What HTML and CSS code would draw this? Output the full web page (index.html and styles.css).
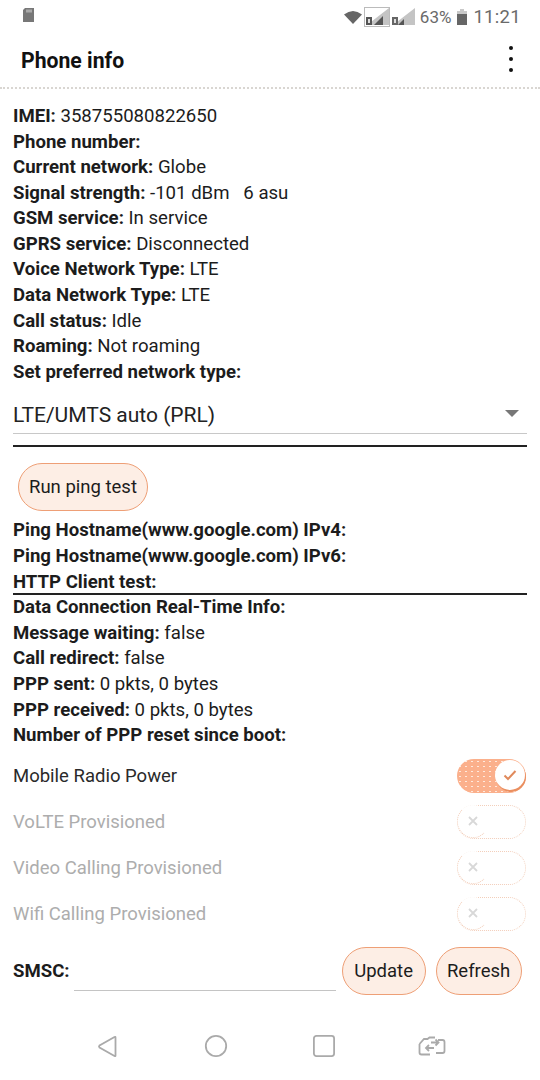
FILE: index.html
```html
<!DOCTYPE html>
<html lang="en">
<head>
<meta charset="utf-8">
<title>Phone info</title>
<link rel="stylesheet" href="styles.css">
</head>
<body>
<div class="screen">
  <div class="status">
    <svg class="sd" viewBox="0 0 11 14" width="11" height="14"><path d="M2 0h9v14H0V2z" fill="#777"/><path d="M4 1.500v3M6 1.500v3M8 1.500v3" stroke="#ddd" stroke-width="1"/></svg>
    <div class="status-right">
      <svg class="wifi" viewBox="0 0 18 14" width="18" height="14"><path d="M0 4.500Q9 -2.500 18 4.500L9 14z" fill="#666"/></svg>
      <div class="sim sim-active">
        <svg viewBox="0 0 24 18" width="24" height="18"><path d="M24 0V17H2z" fill="#c4c4c4"/><path d="M18 8V17H9z" fill="#555"/><rect x="1" y="9" width="6" height="8" fill="#555"/><rect x="3" y="11" width="2" height="4" fill="#ddd"/></svg>
      </div>
      <svg class="sim2" viewBox="0 0 24 18" width="24" height="18"><path d="M24 0V17H2z" fill="#c4c4c4"/><path d="M13 11V17H7z" fill="#555"/><rect x="1" y="9" width="6" height="8" fill="#666"/><rect x="3" y="11" width="2" height="4" fill="#ddd"/></svg>
      <span class="pct">63%</span>
      <svg class="batt" viewBox="0 0 10 16" width="10" height="16"><path d="M3 0h4v2h3v14H0V2h3z" fill="#c9c9c9"/><rect y="5" width="10" height="11" fill="#666"/></svg>
      <span class="clock">11:21</span>
    </div>
  </div>
  <header class="appbar">
    <h1 class="title">Phone info</h1>
    <div class="more"><i></i><i></i><i></i></div>
  </header>
  <main class="content">
    <div class="group">
      <p class="line"><b>IMEI:</b> 358755080822650</p>
      <p class="line"><b>Phone number:</b></p>
      <p class="line"><b>Current network:</b> Globe</p>
      <p class="line"><b>Signal strength:</b> -101 dBm &nbsp; 6 asu</p>
      <p class="line"><b>GSM service:</b> In service</p>
      <p class="line"><b>GPRS service:</b> Disconnected</p>
      <p class="line"><b>Voice Network Type:</b> LTE</p>
      <p class="line"><b>Data Network Type:</b> LTE</p>
      <p class="line"><b>Call status:</b> Idle</p>
      <p class="line"><b>Roaming:</b> Not roaming</p>
      <p class="line"><b>Set preferred network type:</b></p>
    </div>
    <div class="spinner">
      <span>LTE/UMTS auto (PRL)</span>
      <i class="caret"></i>
    </div>
    <div class="rule rule-top"></div>
    <button class="pill ping">Run ping test</button>
    <div class="group">
      <p class="line"><b>Ping Hostname(www.google.com) IPv4:</b></p>
      <p class="line"><b>Ping Hostname(www.google.com) IPv6:</b></p>
      <p class="line"><b>HTTP Client test:</b></p>
    </div>
    <div class="rule rule-mid"></div>
    <div class="group">
      <p class="line"><b>Data Connection Real-Time Info:</b></p>
      <p class="line"><b>Message waiting:</b> false</p>
      <p class="line"><b>Call redirect:</b> false</p>
      <p class="line"><b>PPP sent:</b> 0 pkts, 0 bytes</p>
      <p class="line"><b>PPP received:</b> 0 pkts, 0 bytes</p>
      <p class="line"><b>Number of PPP reset since boot:</b></p>
    </div>
    <div class="toggles">
      <div class="toggle-row">
        <span>Mobile Radio Power</span>
        <div class="switch on"><div class="knob"><svg viewBox="0 0 14 12" width="14" height="12"><path d="M1.500 6.500L5 10L12.500 2" fill="none" stroke="#e08a5c" stroke-width="2"/></svg></div></div>
      </div>
      <div class="toggle-row off">
        <span>VoLTE Provisioned</span>
        <div class="switch"><div class="knob"><svg viewBox="0 0 10 10" width="10" height="10"><path d="M1 1L9 9M9 1L1 9" stroke="#d8d8d8" stroke-width="1.800"/></svg></div></div>
      </div>
      <div class="toggle-row off">
        <span>Video Calling Provisioned</span>
        <div class="switch"><div class="knob"><svg viewBox="0 0 10 10" width="10" height="10"><path d="M1 1L9 9M9 1L1 9" stroke="#d8d8d8" stroke-width="1.800"/></svg></div></div>
      </div>
      <div class="toggle-row off">
        <span>Wifi Calling Provisioned</span>
        <div class="switch"><div class="knob"><svg viewBox="0 0 10 10" width="10" height="10"><path d="M1 1L9 9M9 1L1 9" stroke="#d8d8d8" stroke-width="1.800"/></svg></div></div>
      </div>
    </div>
    <div class="smsc">
      <b>SMSC:</b>
      <div class="field"></div>
      <button class="pill update">Update</button>
      <button class="pill refresh">Refresh</button>
    </div>
  </main>
  <nav class="navbar">
    <svg viewBox="0 0 24 24" width="24" height="24"><path d="M19.500 3.500V21.500Q19.500 22.500 18.500 22L3.500 13.500Q2.500 12.500 3.500 11.500L18.500 3Q19.500 2.500 19.500 3.500Z" fill="none" stroke="#aaa" stroke-width="1.800"/></svg>
    <svg viewBox="0 0 24 24" width="24" height="24"><circle cx="12" cy="12" r="10.200" fill="none" stroke="#aaa" stroke-width="1.800"/></svg>
    <svg viewBox="0 0 24 24" width="24" height="24"><rect x="1.900" y="1.900" width="20.200" height="20.200" rx="2.500" fill="none" stroke="#aaa" stroke-width="1.800"/></svg>
    <svg class="link" viewBox="0 0 28 20" width="28" height="20"><path d="M1.500 8L6 3H9.500L11.500 1.500H17M20 4H24.500Q26.500 4 26.500 6V15Q26.500 17 24.500 17H18M1.500 8V16.500Q1.500 18.500 3.500 18.500H12M13 6.500H20.500M17.500 3.500L20.500 6.500L17.500 9.500M16 12H8M11 9L8 12L11 15" fill="none" stroke="#aaa" stroke-width="1.800"/></svg>
  </nav>
</div>
</body>
</html>
```
FILE: styles.css
```css
* { box-sizing: border-box; }
html, body { margin: 0; padding: 0; }
body { background: #fff; font-family: Roboto, "Liberation Sans", sans-serif; color: #1c1c1c; }
.screen { width: 540px; height: 1080px; display: flex; flex-direction: column; overflow: hidden; background: #fff; }
.status { height: 32px; padding: 8px 19px 0 23px; display: flex; justify-content: space-between; align-items: flex-start; color: #666; }
.status-right { display: flex; align-items: center; height: 18px; }
.wifi { margin-right: 2px; }
.sim-active { width: 26px; height: 20px; border: 1px solid #bbb; margin-right: 1px; display: flex; }
.sim-active svg { width: 24px; height: 18px; }
.sim2 { margin-right: 5px; }
.pct { font-size: 17px; color: #6a6a6a; margin-right: 6px; }
.batt { margin-right: 6px; }
.clock { font-size: 18.500px; color: #6a6a6a; letter-spacing: 0.300px; }
.appbar { height: 60px; padding: 4px 21px 0; display: flex; justify-content: space-between; align-items: center; border-bottom: 2px dotted #d9d6d2; }
.title { margin: 0; font-size: 21.200px; font-weight: 700; color: #111; }
.more { display: flex; flex-direction: column; gap: 7px; margin-right: 6px; margin-top: -4px; }
.more i { width: 4px; height: 4px; border-radius: 50%; background: #111; }
.content { padding: 15px 13px 0; flex: 1; }
.line { margin: 0; font-size: 18.600px; line-height: 25.600px; height: 25.600px; white-space: pre-wrap; }
.line b, .smsc b { font-weight: 700; }
.spinner { height: 49px; padding-top: 11px; border-bottom: 1px solid #c8c8c8; display: flex; justify-content: space-between; align-items: center; font-size: 21px; color: #222; }
.caret { width: 0; height: 0; border-left: 7px solid transparent; border-right: 7px solid transparent; border-top: 7px solid #777; margin-right: 8px; margin-top: -2px; }
.rule { height: 2px; background: #222; }
.rule-top { margin-top: 11px; }
.pill { font-family: inherit; font-size: 18.500px; color: #1c1c1c; background: #fdeee5; border: 1.500px solid #ee9f76; border-radius: 24px; padding: 0; height: 48px; }
.ping { display: block; width: 130px; margin: 16px 0 7px 5px; }
.rule-mid { margin-top: -2px; }
.toggles { margin-top: 4px; }
.toggle-row { height: 46px; display: flex; justify-content: space-between; align-items: center; font-size: 18.500px; color: #2a2a2a; }
.toggle-row.off { color: #adadad; }
.switch { width: 69px; height: 34px; margin-right: 1px; border-radius: 17px; border: 1.500px dotted #f3cfbb; position: relative; background: #fff; }
.switch.on { background-color: #fbb08c; background-image: radial-gradient(circle, #ffe9dd 0.6px, transparent 1px); background-size: 6px 5px; border: 0; }
.knob { position: absolute; left: -1px; top: -1px; width: 32px; height: 33px; border-radius: 50%; background: #fff; border: 1.500px dotted #f3cfbb; border-top-color: transparent; border-right-color: transparent; display: flex; align-items: center; justify-content: center; }
.switch.on .knob { left: 38px; top: 1px; width: 30px; height: 30px; border: 0; box-shadow: 1px 2px 0 #ea8f60; }
.smsc { display: flex; align-items: center; margin-top: 10px; height: 48px; font-size: 18.600px; }
.field { width: 262px; height: 40px; margin-left: 4px; border-bottom: 1px solid #c4c4c4; margin-right: 6px; }
.update { width: 84px; margin-right: 10px; }
.refresh { width: 86px; }
.navbar { height: 88px; padding: 18px 0 0 96px; display: flex; align-items: center; gap: 84px; }
.link { margin-left: -2px; }
```
